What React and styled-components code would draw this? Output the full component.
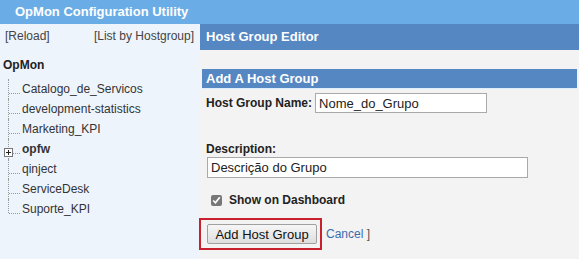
import styled, { createGlobalStyle } from "styled-components";

const GlobalStyle = createGlobalStyle`
  html, body {
    margin: 0;
    padding: 0;
    background: #f3f3f3;
  }
  body {
    font-family: "Liberation Sans", Arial, sans-serif;
    font-size: 12px;
    color: #222;
  }
`;

const Page = styled.div`
  width: 579px;
  height: 259px;
  display: flex;
  flex-direction: column;
  overflow: hidden;
`;

const TopBar = styled.div`
  height: 24px;
  flex: none;
  background: #6aade6;
  color: #fff;
  font-weight: bold;
  font-size: 13px;
  line-height: 24px;
  padding-left: 15px;
`;

const Body = styled.div`
  flex: 1;
  display: flex;
`;

const Sidebar = styled.div`
  width: 200px;
  flex: none;
  background: #eef4fc;
  color: #444;
`;

const LinkRow = styled.div`
  display: flex;
  justify-content: space-between;
  padding: 5px 6px 0 5px;
  height: 14px;
  line-height: 14px;
  font-size: 12px;
`;

const RootNode = styled.div`
  margin-top: 15px;
  padding-left: 3px;
  font-weight: bold;
  color: #222;
  line-height: 14px;
`;

const Tree = styled.div`
  margin-top: 7px;
`;

const TreeItem = styled.div`
  position: relative;
  height: 20px;
  line-height: 20px;
  padding-left: 22px;
  color: #333;
  font-weight: ${(p) => (p.$bold ? "bold" : "normal")};

  &::before {
    content: "";
    position: absolute;
    left: 8px;
    top: 0;
    height: ${(p) => (p.$last ? "14px" : "20px")};
    border-left: 1px dotted #999;
  }
  &::after {
    content: "";
    position: absolute;
    left: 9px;
    width: 11px;
    top: 14px;
    border-top: 1px dotted #999;
  }
`;

const Expander = styled.span`
  position: absolute;
  left: 4px;
  top: 9px;
  width: 7px;
  height: 7px;
  border: 1px solid #777;
  background: #fff;
  z-index: 1;

  &::before,
  &::after {
    content: "";
    position: absolute;
    background: #222;
  }
  &::before {
    left: 1px;
    right: 1px;
    top: 3px;
    height: 1px;
  }
  &::after {
    top: 1px;
    bottom: 1px;
    left: 3px;
    width: 1px;
  }
`;

const Main = styled.div`
  flex: 1;
  background: #f3f3f3;
`;

const EditorHeader = styled.div`
  height: 26px;
  line-height: 26px;
  background: #5587c2;
  color: #fff;
  font-weight: bold;
  font-size: 13px;
  padding-left: 6px;
`;

const Content = styled.div`
  padding: 19px 2px 0 2px;
`;

const SectionBand = styled.div`
  height: 19px;
  line-height: 19px;
  background: #5587c2;
  color: #fff;
  font-weight: bold;
  font-size: 13px;
  padding-left: 4px;
  border-bottom: 1px solid #dbeef9;
`;

const Form = styled.div`
  padding-left: 4px;
`;

const InlineField = styled.div`
  display: flex;
  align-items: center;
  gap: 3px;
  margin-top: 4px;
`;

const Label = styled.label`
  font-weight: bold;
  font-size: 12px;
  color: #222;
`;

const StackField = styled.div`
  display: flex;
  flex-direction: column;
  margin-top: 29px;
`;

const TextInput = styled.input`
  box-sizing: border-box;
  width: ${(p) => p.$w}px;
  height: ${(p) => p.$h}px;
  border: 1px solid #a9a9a9;
  background: #fff;
  font-family: "Liberation Sans", Arial, sans-serif;
  font-size: 13px;
  color: #222;
  padding: 0 3px;
  margin: ${(p) => p.$m || 0};
  outline: none;
`;

const CheckRow = styled.label`
  display: flex;
  align-items: center;
  gap: 7px;
  margin: 15px 0 0 5px;
  font-weight: bold;
  font-size: 12px;
  color: #222;

  input {
    margin: 0;
    width: 11px;
    height: 11px;
    accent-color: #777;
  }
`;

const Actions = styled.div`
  display: flex;
  align-items: center;
  gap: 4px;
  margin: 11px 0 0 -7px;
`;

const Highlight = styled.div`
  border: 2px solid #c9202e;
  padding: 4px 3px 4px 6px;
  display: flex;
`;

const Button = styled.button`
  box-sizing: border-box;
  width: 110px;
  height: 20px;
  border: 1px solid #a0a0a0;
  border-radius: 2px;
  background: linear-gradient(#f6f6f6, #dedede);
  font-family: "Liberation Sans", Arial, sans-serif;
  font-size: 13px;
  color: #111;
  padding: 0;
`;

const CancelLink = styled.span`
  font-size: 12px;
  color: #555;

  a {
    color: #3b6dae;
    text-decoration: none;
  }
`;

const groups = [
  "Catalogo_de_Servicos",
  "development-statistics",
  "Marketing_KPI",
  "opfw",
  "qinject",
  "ServiceDesk",
  "Suporte_KPI",
];

export default function App() {
  return (
    <Page>
      <GlobalStyle />
      <TopBar>OpMon Configuration Utility</TopBar>
      <Body>
        <Sidebar>
          <LinkRow>
            <span>[Reload]</span>
            <span>[List by Hostgroup]</span>
          </LinkRow>
          <RootNode>OpMon</RootNode>
          <Tree>
            {groups.map((g, i) => (
              <TreeItem
                key={g}
                $bold={g === "opfw"}
                $last={i === groups.length - 1}
              >
                {g === "opfw" && <Expander />}
                {g}
              </TreeItem>
            ))}
          </Tree>
        </Sidebar>
        <Main>
          <EditorHeader>Host Group Editor</EditorHeader>
          <Content>
            <SectionBand>Add A Host Group</SectionBand>
            <Form>
              <InlineField>
                <Label>Host Group Name:</Label>
                <TextInput $w={172} $h={20} defaultValue="Nome_do_Grupo" />
              </InlineField>
              <StackField>
                <Label>Description:</Label>
                <TextInput
                  $w={321}
                  $h={21}
                  $m="1px 0 0 1px"
                  defaultValue="Descrição do Grupo"
                />
              </StackField>
              <CheckRow>
                <input type="checkbox" defaultChecked />
                Show on Dashboard
              </CheckRow>
              <Actions>
                <Highlight>
                  <Button>Add Host Group</Button>
                </Highlight>
                <CancelLink>
                  <a href="#">Cancel</a> ]
                </CancelLink>
              </Actions>
            </Form>
          </Content>
        </Main>
      </Body>
    </Page>
  );
}
